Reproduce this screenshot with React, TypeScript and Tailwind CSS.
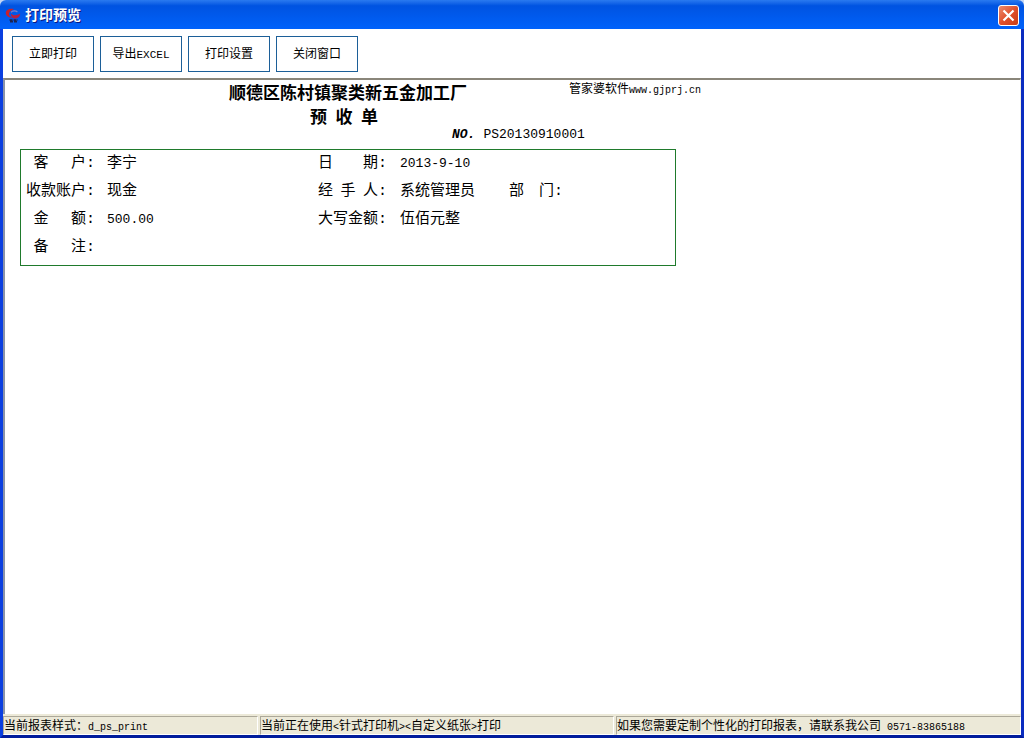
import type { ReactNode } from 'react';

const actions = ['立即打印', '导出EXCEL', '打印设置', '关闭窗口'];

const statusPanels = [
  { text: '当前报表样式：d_ps_print', className: 'w-[255px] shrink-0' },
  { text: '当前正在使用<针式打印机><自定义纸张>打印', className: 'w-[354px] shrink-0' },
  { text: '如果您需要定制个性化的打印报表，请联系我公司 0571-83865188', className: 'flex-1 min-w-0' },
];

// Latin letters and digits are half the width of a Chinese character
function Mixed({ text, latin = 'text-[10px]' }: { text: string; latin?: string }) {
  return (
    <>
      {text.split(/([\x20-\x7e]+)/).map((part, i) =>
        i % 2 === 1 ? (
          <span key={i} className={latin}>{part}</span>
        ) : (
          part
        )
      )}
    </>
  );
}

function AppIcon() {
  return (
    <svg className="w-4 h-4 shrink-0" viewBox="0 0 16 16" fill="none" aria-hidden="true">
      <path d="M9 1.2C5 0 0.8 1.8 0.8 5C0.8 8 3.8 9.8 7.8 10C5.2 8.8 3.6 7.2 4 5.2C4.4 3.4 6.4 2 9 1.2Z" fill="#c8202e" />
      <path d="M6 4.4C7.4 2.6 10.6 2.4 12.4 4" stroke="#8080c4" strokeWidth="1.2" />
      <path d="M6 5.5C7.5 7.6 11.4 8.2 15.2 5.6C15 9.4 11.6 11.2 8.8 10.4C7 9.8 5.8 7.8 6 5.5Z" fill="#b82040" />
      <path d="M4.5 12H13M5 13.6H12.5" stroke="#1c2450" strokeWidth="1.6" strokeDasharray="3 1" />
    </svg>
  );
}

function Label({ children, className = '' }: { children: ReactNode; className?: string }) {
  return <dt className={`whitespace-nowrap ${className}`}>{children}</dt>;
}

function Report() {
  return (
    <article className="w-[656px] ml-[15px] pt-0.5">
      <header className="grid grid-cols-[minmax(0,1fr)_auto_minmax(0,1fr)]">
        <h1 className="col-start-2 text-[17px] leading-[26px] font-bold">顺德区陈村镇聚类新五金加工厂</h1>
        <a href="#" className="pl-[102px] text-[12px] leading-4 whitespace-nowrap">
          <Mixed text="管家婆软件www.gjprj.cn" />
        </a>
        <h2 className="col-start-2 pr-2 text-center text-[17px] leading-[22px] font-bold">{'预\u2002收\u2002单'}</h2>
      </header>
      <p className="flex gap-2 pl-[432px] h-[19px] leading-[10px] text-[13px]">
        <b className="italic">NO.</b>
        <span>PS20130910001</span>
      </p>

      <dl className="grid grid-cols-[86px_211px_82px_109px_1fr] border border-[#1f7a2c] pb-[3px] text-[15px] leading-7">
        <Label className="text-right pr-3">{'客\u2002\u2002\u2002户:'}</Label>
        <dd>李宁</dd>
        <Label>{'日\u2002\u2002\u2002\u2002期:'}</Label>
        <dd className="col-span-2 text-[13px]">2013-9-10</dd>

        <Label className="text-right pr-3">收款账户:</Label>
        <dd>现金</dd>
        <Label>{'经\u2002手\u2002人:'}</Label>
        <dd>系统管理员</dd>
        <Label>{'部\u2002\u2002门:'}</Label>

        <Label className="text-right pr-3 col-start-1">{'金\u2002\u2002\u2002额:'}</Label>
        <dd className="text-[13px]">500.00</dd>
        <Label>大写金额:</Label>
        <dd className="col-span-2">伍佰元整</dd>

        <Label className="text-right pr-3">{'备\u2002\u2002\u2002注:'}</Label>
        <dd className="col-span-4" />
      </dl>
    </article>
  );
}

export default function App() {
  return (
    <div className="min-h-screen flex flex-col bg-[#0831d9] text-black font-['Liberation_Mono','Noto_Sans_CJK_SC',monospace]">
      <div className="bg-[#c4d6f4]">
        <header className="h-[29px] flex items-center justify-between px-[5px] pt-0.5 rounded-t-[6px] bg-linear-to-b from-[#2a7af0] via-[#0053e1] via-20% to-[#0062fb]">
          <div className="flex items-center gap-1">
            <AppIcon />
            <span className="pt-0.5 text-[14px] font-bold text-white [text-shadow:1px_1px_0_#0a1883]">打印预览</span>
          </div>
          <button
            type="button"
            aria-label="关闭"
            className="w-[21px] h-[21px] flex items-center justify-center rounded-[3px] border border-white bg-linear-to-br from-[#ec8a6c] via-[#e0502c] to-[#c83c14] text-white"
          >
            <svg className="w-[13px] h-[13px]" viewBox="0 0 13 13" stroke="currentColor" strokeWidth="2.2" aria-hidden="true">
              <path d="M1.5 1.5L11.5 11.5M11.5 1.5L1.5 11.5" />
            </svg>
          </button>
        </header>
      </div>

      <div className="flex-1 flex flex-col border-x-[3px] border-b-[3px] border-l-[#0a3fe0] border-r-[#0a2cc0] border-b-[#001c9c] bg-[#ece9d8]">
        <nav className="flex gap-1.5 px-[9px] pt-[7px] pb-1.5 bg-white">
          {actions.map((action) => (
            <button
              key={action}
              type="button"
              className="w-[82px] h-9 pt-0.5 border border-[#1c5f98] bg-white text-[12px]"
            >
              <Mixed text={action} latin="text-[11px]" />
            </button>
          ))}
        </nav>

        <main className="flex-1 bg-white border-t-2 border-l-2 border-r border-t-[#8a867a] border-l-[#8a93a8] border-r-[#f1efe2]">
          <Report />
        </main>

        <footer className="flex gap-0.5 pt-0.5 text-[12px] leading-[18px]">
          {statusPanels.map((panel) => (
            <div
              key={panel.text}
              className={`h-[19px] pt-px whitespace-nowrap overflow-hidden border-t border-l border-t-[#aca899] border-l-[#aca899] border-r border-b border-r-white border-b-white ${panel.className}`}
            >
              <Mixed text={panel.text} />
            </div>
          ))}
        </footer>
      </div>
    </div>
  );
}
